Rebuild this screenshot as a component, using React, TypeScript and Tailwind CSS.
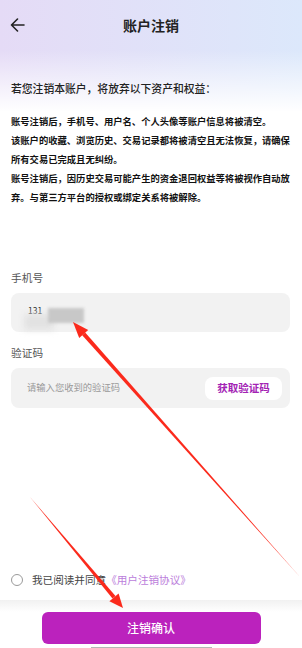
import React, { useState } from 'react';

const BackIcon: React.FC = () => (
  <svg width="15" height="14" viewBox="0 0 15 14" fill="none">
    <path d="M14 7H1.5M7.5 1L1.5 7L7.5 13" stroke="#222" strokeWidth="1.6" strokeLinecap="round" strokeLinejoin="round" />
  </svg>
);

// red annotation arrows drawn over the page
const Arrows: React.FC = () => (
  <svg className="pointer-events-none absolute left-0 top-0" width="302" height="648" viewBox="0 0 302 648">
    <polygon points="300,577 85.2,332.6 82.2,335.2" fill="#fb2a1c" />
    <polygon points="73,322 88.2,329.9 79.2,337.9" fill="#fb2a1c" />
    <polygon points="30,497 115.5,596 112.5,598.6" fill="#fb2a1c" />
    <polygon points="123,608 118.6,593.4 109.4,601.2" fill="#fb2a1c" />
  </svg>
);

const App: React.FC = () => {
  const [agreed, setAgreed] = useState(false);

  return (
    <div
      className="relative flex h-[648px] w-full flex-col overflow-hidden bg-white"
      style={{ fontFamily: '"Noto Sans CJK SC", "Noto Sans", sans-serif' }}
    >
      <div className="bg-[linear-gradient(to_bottom,rgba(255,255,255,0)_0%,rgba(255,255,255,0)_45%,#fff_100%),linear-gradient(to_right,#e5dbf6,#dce8fb)] pb-[16px]">
        <div className="relative flex h-[50px] items-center justify-center">
          <button type="button" className="absolute left-[10px] top-[18px]">
            <BackIcon />
          </button>
          <h1 className="text-[14px] font-bold text-[#222]">账户注销</h1>
        </div>
        <p className="mt-[30px] px-[11px] text-[10.8px] font-medium leading-[16px] text-[#222]">
          若您注销本账户，将放弃以下资产和权益：
        </p>
      </div>

      <div className="pl-[11px] pr-[8px] text-[9.3px] font-bold leading-[19px] text-[#111]">
        <p>账号注销后，手机号、用户名、个人头像等账户信息将被清空。</p>
        <p>该账户的收藏、浏览历史、交易记录都将被清空且无法恢复，请确保所有交易已完成且无纠纷。</p>
        <p>账号注销后，因历史交易可能产生的资金退回权益等将被视作自动放弃。与第三方平台的授权或绑定关系将被解除。</p>
      </div>

      <div className="mt-[63px] pl-[11px] pr-[12px]">
        <label className="block text-[10.7px] leading-[16px] text-[#555]">手机号</label>
        <div className="relative mt-[7px] flex h-[39px] items-center rounded-lg bg-[#f2f2f2] pl-[17px]">
          <span className="-mt-[4px] text-[8.5px] text-[#333]">131</span>
          <div className="absolute left-[13px] top-[21px] h-[16px] w-[30px] bg-[#e2e2e2] blur-[3px]" />
          <div className="absolute left-[37px] top-[15px] h-[15px] w-[36px] bg-[#c8c8c8] blur-[1.5px]" />
        </div>

        <label className="mt-[13px] block text-[10.7px] leading-[16px] text-[#555]">验证码</label>
        <div className="mt-[7px] flex h-[40px] items-center justify-between rounded-lg bg-[#f2f2f2] pl-[16px] pr-[8px]">
          <span className="text-[9.3px] text-[#999]">请输入您收到的验证码</span>
          <button
            type="button"
            className="flex h-[23px] w-[77px] items-center justify-center rounded-lg bg-white text-[10.5px] font-bold text-[#a322b4]"
          >
            获取验证码
          </button>
        </div>
      </div>

      <div className="flex-1" />

      <div className="flex h-[20px] items-center pl-[11px]">
        <button
          type="button"
          onClick={() => setAgreed(!agreed)}
          className={`h-[12px] w-[12px] rounded-full border-[1.5px] ${agreed ? 'border-[#bb22bd] bg-[#bb22bd]' : 'border-[#9a9a9a]'}`}
        />
        <span className="ml-[9px] text-[10.6px] text-[#444]">
          我已阅读并同意<span className="text-[#bb7ddb]">《用户注销协议》</span>
        </span>
      </div>

      <div className="mt-[10px] bg-[linear-gradient(to_bottom,#f1f1f1,#fff_12px)] pt-[12px]">
        <button
          type="button"
          className="mx-auto flex h-[32px] w-[219px] items-center justify-center rounded-md bg-[#bb22bd] text-[12px] font-medium text-white"
        >
          注销确认
        </button>
        <div className="mx-auto mt-[3px] h-[1px] w-[121px] bg-[#b5b5b5]" />
      </div>

      <Arrows />
    </div>
  );
};

export default App;
